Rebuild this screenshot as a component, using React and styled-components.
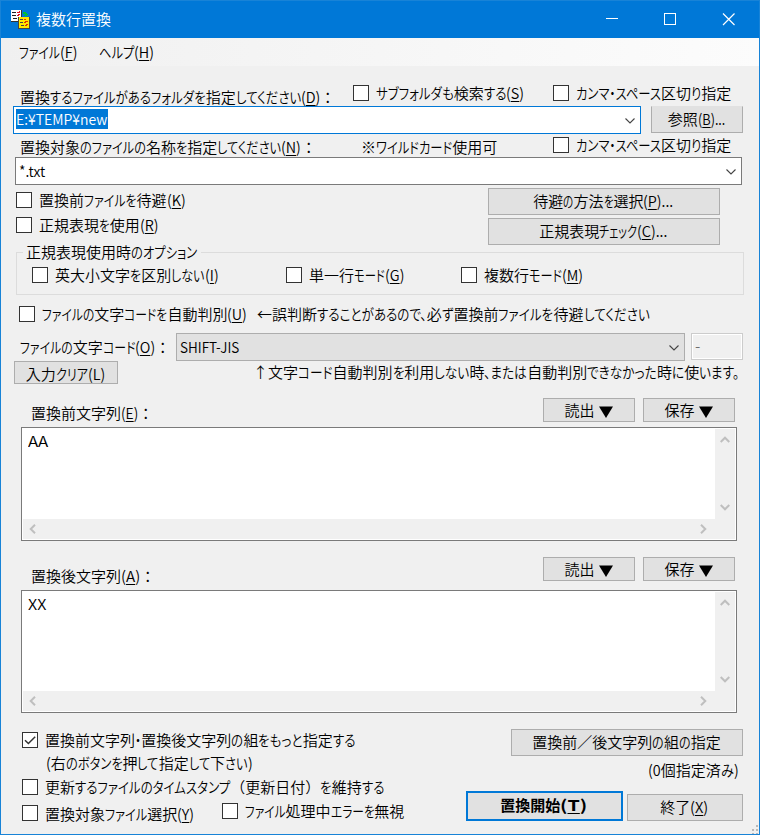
import React, { useLayoutEffect, useRef, useState } from 'react';
import styled, { createGlobalStyle } from 'styled-components';

const BLUE = '#0078d7';
const FACE = '#f0f0f0';
const BUTTON = '#e1e1e1';
const BUTTON_BORDER = '#adadad';
const DARK_BORDER = '#7a7a7a';

const GlobalStyle = createGlobalStyle`
  * { box-sizing: border-box; }
  body {
    margin: 0;
    font-family: "Noto Sans CJK JP", sans-serif;
    font-size: 15px;
    color: #000;
  }
`

/* text */

const Line = styled.span`
  display: block;
  flex: none;
  width: ${ p => p.$w }px;
  height: 20px;
  line-height: 20px;
  margin-left: ${ p => p.$x || 0 }px;
  margin-top: ${ p => p.$y || 0 }px;
  white-space: pre;
  color: ${ p => p.$color || 'inherit' };
`
const Run = styled.span`
  display: inline-block;
  height: 20px;
  line-height: 20px;
  vertical-align: top;
  transform-origin: 0 50%;
  font-weight: ${ p => p.$bold ? 700 : 350 };
`
const Kana = styled(Run)`
  font-feature-settings: "palt";
`
const Key = styled.span`
  text-decoration: underline;
  text-decoration-thickness: 1px;
  text-underline-offset: 2px;
`

const LATIN_SCALE = 0.96;
const RUNS = /[\u3001\u3002\u3041-\u30ff]+|[\u0020-\u00ff]+|[^\u0020-\u00ff\u3001\u3002\u3041-\u30ff]+/g;
const isKana = s => /^[\u3001\u3002\u3041-\u30ff]/.test(s);
const isLatin = s => /^[\u0020-\u00ff]/.test(s);

// "_" in front of a letter marks it as the access key
const accessKey = s => {
  const i = s.indexOf('_');
  if (i < 0) return s;
  return <>{ s.slice(0, i) }<Key>{ s[i + 1] }</Key>{ s.slice(i + 2) }</>;
}

// kanji stay full width, kana (or latin, when there is no kana) take up the rest
const Text = ({ children, w, x, y, bold, color }) => {
  const ref = useRef(null);
  const [fit, setFit] = useState(null);
  const runs = children.match(RUNS);
  const elastic = runs.some(isKana) ? isKana : isLatin;

  useLayoutEffect(() => {
    const widths = [...ref.current.children].map(el => el.getBoundingClientRect().width);
    let fixed = 0;
    let flexible = 0;
    runs.forEach((run, i) => {
      if (elastic(run)) flexible += widths[i];
      else fixed += widths[i] * (isLatin(run) ? LATIN_SCALE : 1);
    });
    const scale = flexible ? (w - 0.7 - fixed) / flexible : 1;
    setFit(runs.map((run, i) => {
      const s = elastic(run) ? scale : isLatin(run) ? LATIN_SCALE : 1;
      return s === 1 ? undefined : { transform: `scaleX(${ s })`, marginRight: widths[i] * (s - 1) };
    }));
  }, []);

  return (
    <Line ref={ref} $w={w} $x={x} $y={y} $color={color}>
      {
        runs.map((run, i) => {
          const style = fit ? fit[i] : undefined;
          if (isKana(run)) return <Kana key={i} style={style}>{ run }</Kana>;
          return <Run key={i} $bold={bold} style={style}>{ isLatin(run) ? accessKey(run) : run }</Run>;
        })
      }
    </Line>
  )
}

/* window */

const Window = styled.div`
  display: flex;
  flex-direction: column;
  width: 760px;
  height: 835px;
  overflow: hidden;
  background: ${ FACE };
  border: 1px solid #1883d7;
`
const TitleBar = styled.div`
  display: flex;
  flex: none;
  height: 37px;
  padding-left: 9px;
  background: ${ BLUE };
`
const AppIcon = styled.svg`
  flex: none;
  margin-top: 7px;
`
const Captions = styled.svg`
  margin-left: auto;
`
const MenuBar = styled.div`
  display: flex;
  flex: none;
  height: 28px;
  background: linear-gradient(90deg, #f0f0f0, #fcfcfc);
`
const Row = styled.div`
  display: flex;
  flex: none;
  align-items: flex-start;
  height: ${ p => p.$h }px;
  padding-left: ${ p => p.$x || 0 }px;
`
const Column = styled.div`
  display: flex;
  flex-direction: column;
  flex: none;
  width: ${ p => p.$w }px;
`

/* controls */

const CheckItem = styled.div`
  display: flex;
  flex: none;
  margin-left: ${ p => p.$x || 0 }px;
  margin-top: ${ p => p.$y || 0 }px;
`
const Box = styled.span`
  display: flex;
  flex: none;
  width: 16px;
  height: 16px;
  margin-right: 7px;
  background: #fff;
  border: 1px solid #333;
`
const Check = ({ x, y, w, dy = -2, checked, children }) => (
  <CheckItem $x={x} $y={y}>
    <Box>
      {
        checked && (
          <svg width="14" height="14" viewBox="0 0 14 14" fill="none" stroke="#333" strokeWidth="1.5">
            <path d="M2 7.2 L5.4 10.5 L12.2 3.7" />
          </svg>
        )
      }
    </Box>
    <Text w={w} y={dy}>{ children }</Text>
  </CheckItem>
)

const Button = styled.button`
  display: flex;
  flex: none;
  justify-content: center;
  align-items: flex-start;
  width: ${ p => p.$w }px;
  height: ${ p => p.$h || 27 }px;
  margin: ${ p => p.$y || 0 }px 0 0 ${ p => p.$x || 0 }px;
  padding: ${ p => p.$pad === undefined ? 2 : p.$pad }px 1px 0 0;
  font: inherit;
  color: #000;
  background: ${ BUTTON };
  border: ${ p => p.$primary ? `2px solid ${ BLUE }` : `1px solid ${ BUTTON_BORDER }` };
`
const BrowseButton = styled(Button)`
  border-top-color: ${ BUTTON };
`

const Combo = styled.div`
  display: flex;
  flex: none;
  justify-content: space-between;
  align-items: flex-start;
  width: ${ p => p.$w }px;
  height: 28px;
  padding: ${ p => p.$pad || 3 }px 5px 0 ${ p => p.$left || 2 }px;
  background: ${ p => p.$flat ? BUTTON : '#fff' };
  border: 1px solid ${ p => p.$active ? BLUE : p.$flat ? BUTTON_BORDER : DARK_BORDER };
`
const Selection = styled.div`
  height: 20px;
  width: 92px;
  color: #fff;
  background: ${ BLUE };
`
const ReadOnly = styled.div`
  width: 52px;
  height: 27px;
  margin-left: 6px;
  padding: 2px 0 0 3px;
  color: #6d6d6d;
  background: ${ FACE };
  border: 1px solid #ccc;
  box-shadow: inset 0 0 0 1px #fff;
`

const ChevronIcon = styled.svg`
  flex: none;
  margin-top: ${ p => p.$top }px;
`
const Chevron = ({ top }) => (
  <ChevronIcon $top={top} width="10" height="6" viewBox="0 0 10 6" fill="none" stroke="#444" strokeWidth="1.1">
    <path d="M0.5 0.5 L5 5 L9.5 0.5" />
  </ChevronIcon>
)

const GroupBox = styled.fieldset`
  display: flex;
  width: 728px;
  height: 53px;
  margin: 0 0 0 15px;
  padding: 0;
  border: 1px solid #dcdcdc;
`
const Legend = styled.legend`
  height: 20px;
  margin-left: 6px;
  padding: 0 3px;
`

const Area = styled.div`
  display: grid;
  flex: none;
  grid-template-columns: 1fr 20px;
  grid-template-rows: 1fr 20px;
  width: 716px;
  height: ${ p => p.$h }px;
  margin-left: 20px;
  padding: 1px;
  background: #fff;
  border: 1px solid ${ DARK_BORDER };
`
const AreaBody = styled.div`
  padding: 2px 5px;
`
const VBar = styled.div`
  display: flex;
  flex-direction: column;
  justify-content: space-between;
  align-items: center;
  padding: 7px 1px 8px 0;
  background: ${ FACE };
`
const HBar = styled.div`
  display: flex;
  grid-column: 1 / 3;
  justify-content: space-between;
  align-items: center;
  padding: 0 28px 1px 6px;
  background: ${ FACE };
`
const Arrow = ({ d, w, h }) => (
  <svg width={w} height={h} viewBox={`0 0 ${ w } ${ h }`} fill="none" stroke="#bfbfbf" strokeWidth="2">
    <path d={d} />
  </svg>
)
const TextArea = ({ h, w, children }) => (
  <Area $h={h}>
    <AreaBody><Text w={w}>{ children }</Text></AreaBody>
    <VBar>
      <Arrow w={10} h={7} d="M0.7 6 L5 1.7 L9.3 6" />
      <Arrow w={10} h={7} d="M0.7 1 L5 5.3 L9.3 1" />
    </VBar>
    <HBar>
      <Arrow w={7} h={10} d="M6 0.7 L1.7 5 L6 9.3" />
      <Arrow w={7} h={10} d="M1 0.7 L5.3 5 L1 9.3" />
    </HBar>
  </Area>
)

const Triangle = styled.svg`
  flex: none;
  margin: 6px 0 0 4px;
`
const MenuButton = ({ x, label }) => (
  <Button $w={92} $h={24} $x={x} $pad={1}>
    <Text w={30}>{ label }</Text>
    <Triangle width="14" height="12" viewBox="0 0 14 12">
      <path d="M0 0.5 H14 L7 12 Z" />
    </Triangle>
  </Button>
)

const Footer = styled.div`
  display: flex;
  flex: 1;
`
const Grip = styled.svg`
  flex: none;
  align-self: flex-end;
  margin-left: auto;
`

const Icon = () => (
  <AppIcon width="22" height="22" viewBox="0 0 22 22" shapeRendering="crispEdges">
    <rect x="1" y="2" width="11" height="12" fill="#333" />
    <rect x="1" y="2" width="10" height="11" fill="#fff" />
    <path d="M2 4.5H6M2 7.5H6M3 10.5H7" stroke="#222" />
    <path d="M7 4.5H10M7 7.5H9M8 10.5H10M8 6.5H10M9 3.5H10" stroke="#e01020" />
    <path d="M13 4H16V5H17V6H18V7H17V8H14V7H15V6H13Z" fill="#00c030" />
    <rect x="8" y="9" width="12" height="12" fill="#444" />
    <rect x="9" y="9" width="10" height="11" fill="#ffe800" />
    <path d="M10 11.5H13M10 14.5H13M11 17.5H14" stroke="#444" />
    <path d="M14 11.5H16M14 14.5H16M15 13.5H18M15 17.5H17M16 16.5H18" stroke="#e03000" />
  </AppIcon>
)

const App = () => (
  <>
    <GlobalStyle />
    <Window>
      <TitleBar>
        <Icon />
        <Text w={75} x={4} y={8} color="#fff">複数行置換</Text>
        <Captions width="160" height="37" viewBox="0 0 160 37" fill="none" stroke="#fff">
          <path d="M7 17.5H19" />
          <rect x="65.5" y="12.5" width="11" height="11" shapeRendering="crispEdges" />
          <path d="M124 12.5L135.5 24M135.5 12.5L124 24" strokeWidth="1.2" />
        </Captions>
      </TitleBar>
      <MenuBar>
        <Text w={59} x={18} y={4}>ファイル(_F)</Text>
        <Text w={56} x={21} y={4}>ヘルプ(_H)</Text>
      </MenuBar>

      <Row $h={40} $x={19}>
        <Text w={316} y={21}>置換するファイルがあるフォルダを指定してください(_D)：</Text>
        <Check x={17} y={19} w={149}>サブフォルダも検索する(_S)</Check>
        <Check x={28} y={19} w={156}>カンマ・スペース区切り指定</Check>
      </Row>
      <Row $h={28} $x={12}>
        <Combo $w={628} $active $pad={2}>
          <Selection><Text w={92}>E:¥TEMP¥new</Text></Selection>
          <Chevron top={9} />
        </Combo>
        <BrowseButton $w={92} $x={10}><Text w={58}>参照(_B)...</Text></BrowseButton>
      </Row>
      <Row $h={23} $x={19}>
        <Text w={297} y={3}>置換対象のファイルの名称を指定してください(_N)：</Text>
        <Text w={137} x={44} y={3}>※ワイルドカード使用可</Text>
        <Check x={55} y={3} w={156}>カンマ・スペース区切り指定</Check>
      </Row>
      <Row $h={31} $x={14}>
        <Combo $w={727} $left={3}>
          <Text w={27}>*.txt</Text>
          <Chevron top={8} />
        </Combo>
      </Row>
      <Row $h={54} $x={15}>
        <Column $w={472}>
          <Row $h={25}><Check y={4} w={147}>置換前ファイルを待避(_K)</Check></Row>
          <Row $h={25}><Check y={4} w={120}>正規表現を使用(_R)</Check></Row>
        </Column>
        <Column $w={232}>
          <Button $w={232}><Text w={141}>待避の方法を選択(_P)...</Text></Button>
          <Button $w={232} $y={3}><Text w={129}>正規表現チェック(_C)...</Text></Button>
        </Column>
      </Row>
      <GroupBox>
        <Legend><Text w={172}>正規表現使用時のオプション</Text></Legend>
        <Row $h={30} $x={15}>
          <Check y={5} w={164}>英大小文字を区別しない(_I)</Check>
          <Check x={67} y={5} w={96}>単一行モード(_G)</Check>
          <Check x={56} y={5} w={100}>複数行モード(_M)</Check>
        </Row>
      </GroupBox>
      <Row $h={38} $x={18}>
        <Check y={11} w={206}>ファイルの文字コードを自動判別(_U)</Check>
        <Text w={393} x={9} y={9}>←誤判断することがあるので、必ず置換前ファイルを待避してください</Text>
      </Row>
      <Row $h={28} $x={19}>
        <Text w={151} y={4}>ファイルの文字コード(_O)：</Text>
        <Row $h={28} $x={5}>
          <Combo $w={509} $flat $left={3}>
            <Text w={60}>SHIFT-JIS</Text>
            <Chevron top={8} />
          </Combo>
          <ReadOnly><Text w={6}>-</Text></ReadOnly>
        </Row>
      </Row>
      <Row $h={37} $x={13}>
        <Button $w={104} $h={23}><Text w={80}>入力クリア(L)</Text></Button>
        <Text w={487} x={135} y={1}>↑文字コード自動判別を利用しない時、または自動判別できなかった時に使います。</Text>
      </Row>

      <Row $h={29} $x={30}>
        <Text w={123} y={5}>置換前文字列(_E)：</Text>
        <MenuButton x={389} label="読出" />
        <MenuButton x={8} label="保存" />
      </Row>
      <TextArea h={114} w={21}>AA</TextArea>
      <Row $h={16} />
      <Row $h={33} $x={30}>
        <Text w={125} y={9}>置換後文字列(_A)：</Text>
        <MenuButton x={387} label="読出" />
        <MenuButton x={8} label="保存" />
      </Row>
      <TextArea h={123} w={19}>XX</TextArea>

      <Footer>
        <Column $w={444}>
          <Row $h={43} $x={21}>
            <Check y={19} w={311} checked>置換前文字列・置換後文字列の組をもっと指定する</Check>
          </Row>
          <Row $h={23} $x={45}>
            <Text w={207} y={-3}>(右のボタンを押して指定して下さい)</Text>
          </Row>
          <Row $h={24} $x={21}>
            <Check w={340}>更新するファイルのタイムスタンプ（更新日付）を維持する</Check>
          </Row>
          <Row $h={28} $x={21}>
            <Check y={2} w={150} dy={-1}>置換対象ファイル選択(_Y)</Check>
            <Check x={27} w={160}>ファイル処理中エラーを無視</Check>
          </Row>
        </Column>
        <Column $w={298}>
          <Row $h={47} $x={66}>
            <Button $w={232} $y={16}><Text w={189}>置換前／後文字列の組の指定</Text></Button>
          </Row>
          <Row $h={31} $x={203}><Text w={91}>(0個指定済み)</Text></Row>
          <Row $h={43} $x={21}>
            <Button $w={157} $h={30} $primary><Text w={88} bold>置換開始(_T)</Text></Button>
            <Button $w={116} $x={4} $y={3}><Text w={49}>終了(_X)</Text></Button>
          </Row>
        </Column>
        <Grip width="9" height="9" viewBox="0 0 9 9" fill="#b8b8b8">
          <path d="M6 0H8V2H6ZM6 4H8V6H6ZM2 4H4V6H2ZM6 8H8V9H6ZM2 8H4V9H2Z" />
        </Grip>
      </Footer>
    </Window>
  </>
)

export default App;
